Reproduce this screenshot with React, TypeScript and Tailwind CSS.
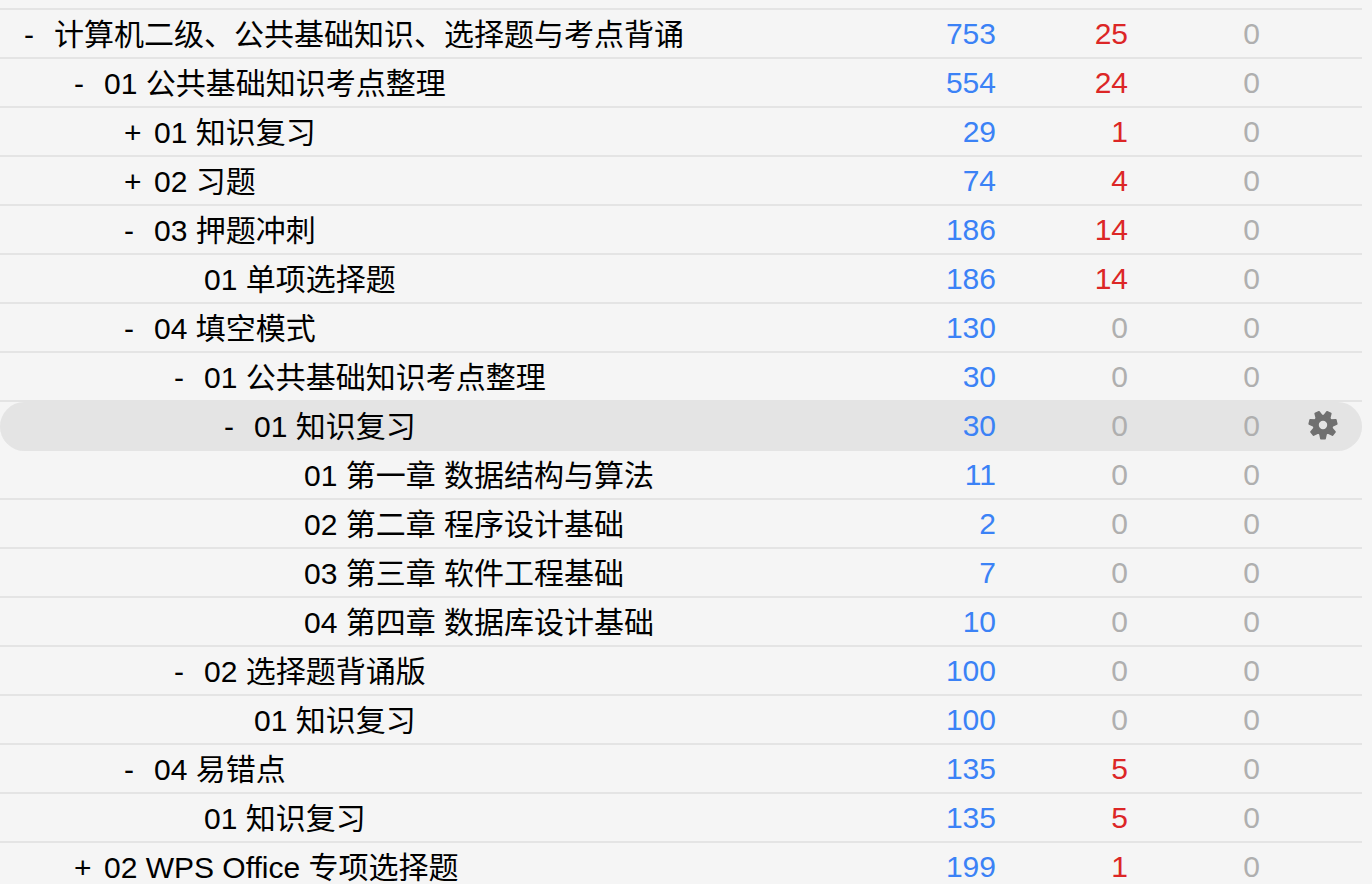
type Deck = {
  name: string;
  level: number;
  toggle?: "-" | "+";
  fresh: number;
  learn: number;
  due: number;
  current?: boolean;
};

const decks: Deck[] = [
  { name: "计算机二级、公共基础知识、选择题与考点背诵", level: 0, toggle: "-", fresh: 753, learn: 25, due: 0 },
  { name: "01 公共基础知识考点整理", level: 1, toggle: "-", fresh: 554, learn: 24, due: 0 },
  { name: "01 知识复习", level: 2, toggle: "+", fresh: 29, learn: 1, due: 0 },
  { name: "02 习题", level: 2, toggle: "+", fresh: 74, learn: 4, due: 0 },
  { name: "03 押题冲刺", level: 2, toggle: "-", fresh: 186, learn: 14, due: 0 },
  { name: "01 单项选择题", level: 3, fresh: 186, learn: 14, due: 0 },
  { name: "04 填空模式", level: 2, toggle: "-", fresh: 130, learn: 0, due: 0 },
  { name: "01 公共基础知识考点整理", level: 3, toggle: "-", fresh: 30, learn: 0, due: 0 },
  { name: "01 知识复习", level: 4, toggle: "-", fresh: 30, learn: 0, due: 0, current: true },
  { name: "01 第一章 数据结构与算法", level: 5, fresh: 11, learn: 0, due: 0 },
  { name: "02 第二章 程序设计基础", level: 5, fresh: 2, learn: 0, due: 0 },
  { name: "03 第三章 软件工程基础", level: 5, fresh: 7, learn: 0, due: 0 },
  { name: "04 第四章 数据库设计基础", level: 5, fresh: 10, learn: 0, due: 0 },
  { name: "02 选择题背诵版", level: 3, toggle: "-", fresh: 100, learn: 0, due: 0 },
  { name: "01 知识复习", level: 4, fresh: 100, learn: 0, due: 0 },
  { name: "04 易错点", level: 2, toggle: "-", fresh: 135, learn: 5, due: 0 },
  { name: "01 知识复习", level: 3, fresh: 135, learn: 5, due: 0 },
  { name: "02 WPS Office 专项选择题", level: 1, toggle: "+", fresh: 199, learn: 1, due: 0 },
];

const indents = ["pl-6", "pl-[74px]", "pl-[124px]", "pl-[174px]", "pl-[224px]", "pl-[274px]"];

function Gear() {
  return (
    <svg viewBox="-15 -15 30 30" className="size-[30px]" aria-hidden="true">
      <circle r="7.2" fill="none" stroke="#707070" strokeWidth="6" />
      {[0, 1, 2, 3, 4, 5, 6].map((i) => (
        <path
          key={i}
          d="M-4 8.5L-2.9 13.8Q-2.8 14.5-2.1 14.5H2.1Q2.8 14.5 2.9 13.8L4 8.5Z"
          fill="#707070"
          transform={`rotate(${(i * 360) / 7})`}
        />
      ))}
    </svg>
  );
}

function Count({ value, color, current }: { value: number; color: string; current?: boolean }) {
  return (
    <td
      className={`h-[49px] border-b-2 border-[#e4e4e4] p-0 text-right ${current ? "bg-[#e4e4e4]" : ""} ${value ? color : "text-[#afafaf]"}`}
    >
      {value ? (
        <a href="#study" className="block">
          {value}
        </a>
      ) : (
        <span className="block">{value}</span>
      )}
    </td>
  );
}

function DeckRow({ deck }: { deck: Deck }) {
  const fill = deck.current ? "bg-[#e4e4e4]" : "";
  return (
    <tr>
      <td className={`h-[49px] border-b-2 border-[#e4e4e4] p-0 ${fill} ${deck.current ? "rounded-l-full" : ""}`}>
        <div className={`flex pt-0.5 whitespace-nowrap ${indents[deck.level]}`}>
          {deck.toggle ? (
            <button type="button" className="w-[30px] shrink-0 text-left">
              {deck.toggle}
            </button>
          ) : (
            <span className="w-[30px] shrink-0" />
          )}
          <a href="#deck">{deck.name}</a>
        </div>
      </td>
      <Count value={deck.fresh} color="text-[#3b82f6]" current={deck.current} />
      <Count value={deck.learn} color="text-[#dc2626]" current={deck.current} />
      <Count value={deck.due} color="text-[#16a34a]" current={deck.current} />
      <td className={`h-[49px] border-b-2 border-[#e4e4e4] p-0 pr-6 pb-0.5 ${fill} ${deck.current ? "rounded-r-full" : ""}`}>
        {deck.current && (
          <button type="button" aria-label="选项" className="ml-auto block">
            <Gear />
          </button>
        )}
      </td>
    </tr>
  );
}

export default function App() {
  return (
    <main className="h-screen overflow-hidden bg-[#f5f5f5] pt-2 pr-2.5 font-['Liberation_Sans','Noto_Sans_CJK_SC',sans-serif] text-[30px] leading-[36px] text-black">
      <table className="w-full table-fixed border-separate border-spacing-0 border-t-2 border-[#e4e4e4]">
        <colgroup>
          <col />
          <col className="w-[132px]" />
          <col className="w-[132px]" />
          <col className="w-[132px]" />
          <col className="w-[102px]" />
        </colgroup>
        <tbody>
          {decks.map((deck, i) => (
            <DeckRow key={i} deck={deck} />
          ))}
        </tbody>
      </table>
    </main>
  );
}
